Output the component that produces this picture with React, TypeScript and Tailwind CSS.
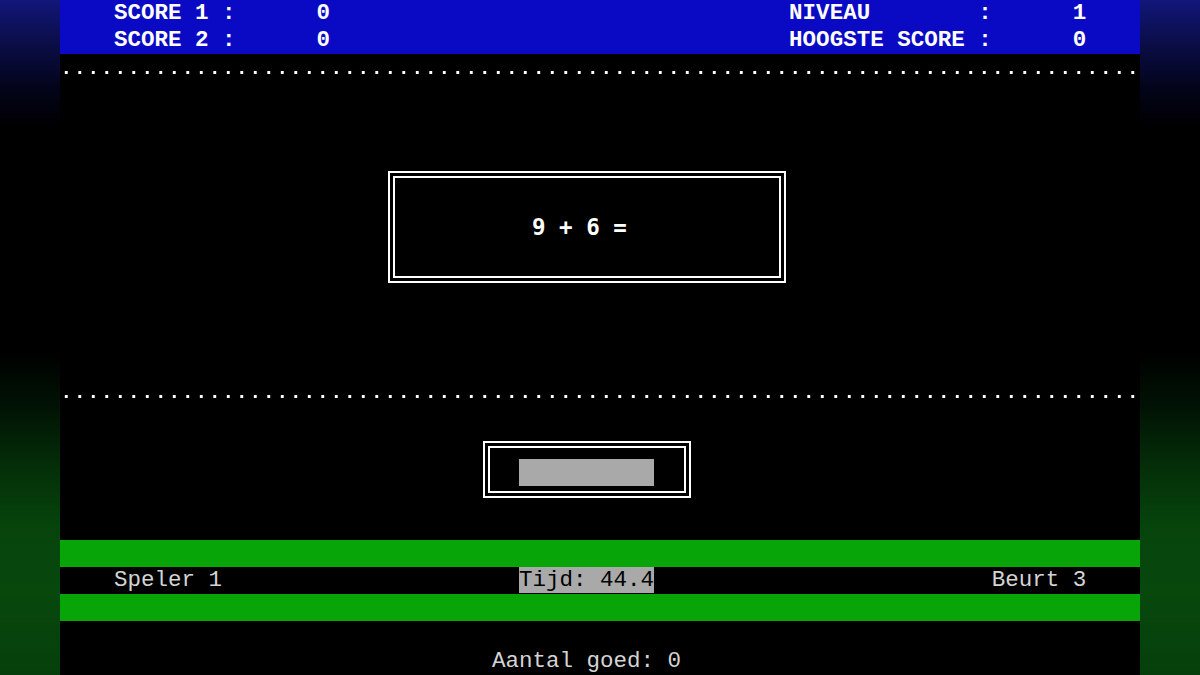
// Rekenspel in DOS-tekstmodus: 80 kolommen x 25 rijen, elke cel 13.5 x 27 px.

function at(parts: [number, string][]) {
  let s = "";
  for (const [col, text] of parts) {
    s = s.padEnd(col, " ") + text;
  }
  return s;
}

function Dots() {
  return (
    <div className="h-[27px] pt-[17px]">
      <div className="h-[3px] bg-[linear-gradient(to_right,transparent_5px,#ffffff_5px,#ffffff_8px,transparent_8px)] bg-[length:13.5px_3px] bg-repeat-x" />
    </div>
  );
}

function Gutter() {
  return (
    <div className="w-[60px] shrink-0 bg-[linear-gradient(to_bottom,#11167a_0%,#0b0e4a_6%,#03041a_13%,#000000_19%,#000000_52%,#011204_60%,#042e08_69%,#06440c_78%,#07480d_88%,#063f0b_100%)]" />
  );
}

export default function App() {
  return (
    <div className="flex h-[675px] w-[1200px] overflow-hidden bg-black font-['Liberation_Mono',monospace] text-[22.5px] leading-[27px]">
      <Gutter />

      <main className="flex w-[1080px] shrink-0 flex-col whitespace-pre">
        <header className="h-[54px] bg-[#0a0ac4] font-bold text-white">
          <div>{at([[4, "SCORE 1 :"], [19, "0"], [54, "NIVEAU"], [68, ":"], [75, "1"]])}</div>
          <div>{at([[4, "SCORE 2 :"], [19, "0"], [54, "HOOGSTE SCORE :"], [75, "0"]])}</div>
        </header>

        <Dots />
        <div className="h-[81px]" />

        <section className="h-[135px] pt-[9px] pl-[328px]">
          <div className="h-[112px] w-[398px] border-2 border-white p-[3px]">
            <div className="flex h-full items-center border-2 border-white pl-[137px] font-['DejaVu_Sans_Mono',monospace] font-bold text-white">
              9 + 6 =
            </div>
          </div>
        </section>

        <div className="h-[81px]" />
        <Dots />
        <div className="h-[27px]" />

        <section className="h-[81px] pt-[9px] pl-[423px]">
          <div className="h-[57px] w-[208px] border-2 border-white p-[3px]">
            <div className="h-full border-2 border-white pt-[11px] pl-[29px]">
              <div className="h-[27px] w-[135px] bg-[#a9a9a9]" />
            </div>
          </div>
        </section>

        <div className="h-[27px]" />
        <div className="h-[27px] bg-[#07a507]" />
        <div className="h-[27px] text-[#d4d4d4]">
          {at([[4, "Speler 1"]]).padEnd(34, " ")}
          <span className="bg-[#a9a9a9] text-black">Tijd: 44.4</span>
          {"".padEnd(25, " ")}
          Beurt 3
        </div>
        <div className="h-[27px] bg-[#07a507]" />
        <div className="h-[27px]" />
        <div className="h-[27px] text-[#d4d4d4]">{at([[32, "Aantal goed: 0"]])}</div>
      </main>

      <Gutter />
    </div>
  );
}
